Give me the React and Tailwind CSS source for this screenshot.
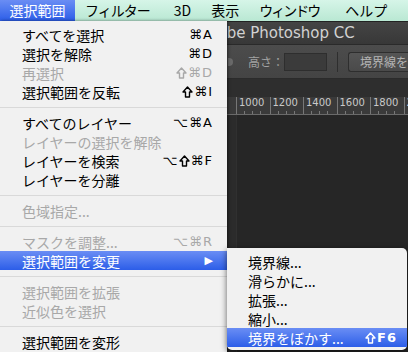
const jp = { fontFamily: '"Noto Sans CJK JP", "DejaVu Sans", sans-serif' };
const sym = { fontFamily: '"DejaVu Sans", "Noto Sans CJK JP", sans-serif' };

const mainItems = [
  { label: 'すべてを選択', key: '⌘A' },
  { label: '選択を解除', key: '⌘D' },
  { label: '再選択', key: '⇧⌘D', off: true },
  { label: '選択範囲を反転', key: '⇧⌘I' },
  { sep: true },
  { label: 'すべてのレイヤー', key: '⌥⌘A' },
  { label: 'レイヤーの選択を解除', off: true },
  { label: 'レイヤーを検索', key: '⌥⇧⌘F' },
  { label: 'レイヤーを分離' },
  { sep: true },
  { label: '色域指定...', off: true },
  { sep: true },
  { label: 'マスクを調整...', key: '⌥⌘R', off: true },
  { label: '選択範囲を変更', sub: true, active: true },
  { sep: true },
  { label: '選択範囲を拡張', off: true },
  { label: '近似色を選択', off: true },
  { sep: true },
  { label: '選択範囲を変形' },
];

const subItems = [
  { label: '境界線...' },
  { label: '滑らかに...' },
  { label: '拡張...' },
  { label: '縮小...' },
  { label: '境界をぼかす...', key: '⇧F6', active: true },
];

const rulerMarks = ['1000', '1200', '1400', '1600', '1800', '2000'];

// shift key glyph, drawn as an outlined up arrow
const ShiftIcon = () => (
  <svg width="11" height="12" viewBox="0 0 11 12" className="mr-[1px]">
    <path d="M5.5 1 L10 6 H7.5 V11 H3.5 V6 H1 Z" fill="none" stroke="currentColor" strokeWidth="1.4" strokeLinejoin="round" />
  </svg>
);

function Keys({ keys, bold }) {
  return (
    <span className={`flex items-center text-[13px] leading-none tracking-[1px] whitespace-nowrap ${bold ? 'font-bold' : ''}`} style={sym}>
      {[...keys].map((k, i) => (k === '⇧' ? <ShiftIcon key={i} /> : <span key={i}>{k}</span>))}
    </span>
  );
}

function MenuRow({ item, padLeft = 'pl-[22px]', padRight = 'pr-[14px]' }) {
  if (item.sep) {
    return (
      <div className="h-[12px] flex items-center">
        <div className="w-full h-px bg-[#d9d9d9]" />
      </div>
    );
  }
  const color = item.active
    ? 'text-white bg-gradient-to-b from-[#6a8df4] to-[#2c5de8]'
    : item.off
    ? 'text-[#a8a8a8]'
    : 'text-black';
  return (
    <div className={`h-[19px] flex items-center justify-between ${padLeft} ${padRight} ${color}`}>
      <span className="text-[14px] leading-none whitespace-nowrap" style={jp}>{item.label}</span>
      {item.key && <Keys keys={item.key} bold={item.active} />}
      {item.sub && <span className="text-[11px] leading-none" style={sym}>▶</span>}
    </div>
  );
}

export default function App() {
  return (
    <div className="w-[408px] h-[352px] relative overflow-hidden bg-[#262626] flex flex-col">
      {/* mac menu bar */}
      <div className="h-[21px] flex items-center bg-gradient-to-b from-[#d6f5e8] to-[#b9e8d3] text-black text-[14px] whitespace-nowrap" style={jp}>
        <div className="h-full w-[75px] shrink-0 flex items-center justify-center text-white bg-gradient-to-b from-[#6a8df4] to-[#2c5de8]">選択範囲</div>
        <div className="ml-[10px] tracking-[-1px]">フィルター</div>
        <div className="ml-[24px]">3D</div>
        <div className="ml-[20px]">表示</div>
        <div className="ml-[20px] tracking-[-2px]">ウィンドウ</div>
        <div className="ml-[26px]">ヘルプ</div>
      </div>

      {/* photoshop window */}
      <div className="h-[24px] flex bg-gradient-to-b from-[#444444] to-[#383838] border-t border-[#222] border-b border-b-[#2a2a2a]">
        <div className="w-[227px] shrink-0" />
        <div className="flex-1 overflow-hidden flex items-center">
          <span className="-ml-[29px] text-[#d2d2d2] text-[15px] whitespace-nowrap" style={sym}>Adobe Photoshop CC</span>
        </div>
      </div>
      <div className="h-[34px] flex items-center bg-gradient-to-b from-[#4c4c4c] to-[#444444] border-b border-[#2b2b2b] text-[12px] text-[#a2a2a2] whitespace-nowrap overflow-hidden" style={jp}>
        <div className="w-[228px] shrink-0" />
        <div className="w-[5px] h-[8px] shrink-0 bg-[#6a6a6a] rounded-r-sm" />
        <span className="ml-[15px] shrink-0">高さ：</span>
        <div className="ml-[0px] w-[43px] h-[18px] shrink-0 bg-[#3b3b3b] border border-[#2e2e2e]" />
        <div className="ml-[10px] w-px h-[20px] shrink-0 bg-[#2e2e2e]" />
        <div className="ml-[10px] h-[20px] pl-[11px] pr-2 shrink-0 flex items-center rounded-l-[3px] border border-r-0 border-[#2e2e2e] bg-gradient-to-b from-[#555] to-[#4a4a4a] text-[#b4b4b4]">境界線を調</div>
      </div>
      <div className="h-[18px] bg-[#2e2e2e]" />
      <div className="h-[18px] flex bg-[#3a3a3a] border-b border-[#6a6a6a] overflow-hidden">
        <div className="w-[236px] shrink-0" />
        {rulerMarks.map((m) => (
          <div key={m} className="w-[33.5px] shrink-0 h-full border-l border-[#777] flex flex-col">
            <span className="pl-[2px] text-[10px] leading-[12px] text-[#c9c9c9]" style={sym}>{m}</span>
            <div className="mt-auto flex h-[3px]">
              <div className="w-[8px] border-r border-[#777]" />
              <div className="w-[8px] border-r border-[#777]" />
              <div className="w-[8px] border-r border-[#777]" />
            </div>
          </div>
        ))}
      </div>
      <div className="flex-1 flex">
        <div className="w-[221px] shrink-0" />
        <div className="w-[16px] shrink-0 bg-[#2b2b2b] border-r border-[#303030]" />
        <div className="flex-1 bg-[#262626]" />
      </div>

      {/* selection menu */}
      <div className="absolute left-0 top-[21px] w-[227px] h-[340px] bg-[#f1f1f1] pt-[4px] shadow-[1px_0_3px_rgba(0,0,0,0.5)]">
        {mainItems.map((it, i) => (
          <MenuRow key={i} item={it} />
        ))}
      </div>

      {/* submenu */}
      <div className="absolute left-[227px] top-[248px] w-[180px] h-[102px] bg-[#f1f1f1] pt-[4px] rounded-tr-[5px] rounded-b-[5px] shadow-[0_2px_6px_rgba(0,0,0,0.6)] overflow-hidden">
        {subItems.map((it, i) => (
          <MenuRow key={i} item={it} padLeft="pl-[21px]" padRight="pr-[10px]" />
        ))}
      </div>
    </div>
  );
}
